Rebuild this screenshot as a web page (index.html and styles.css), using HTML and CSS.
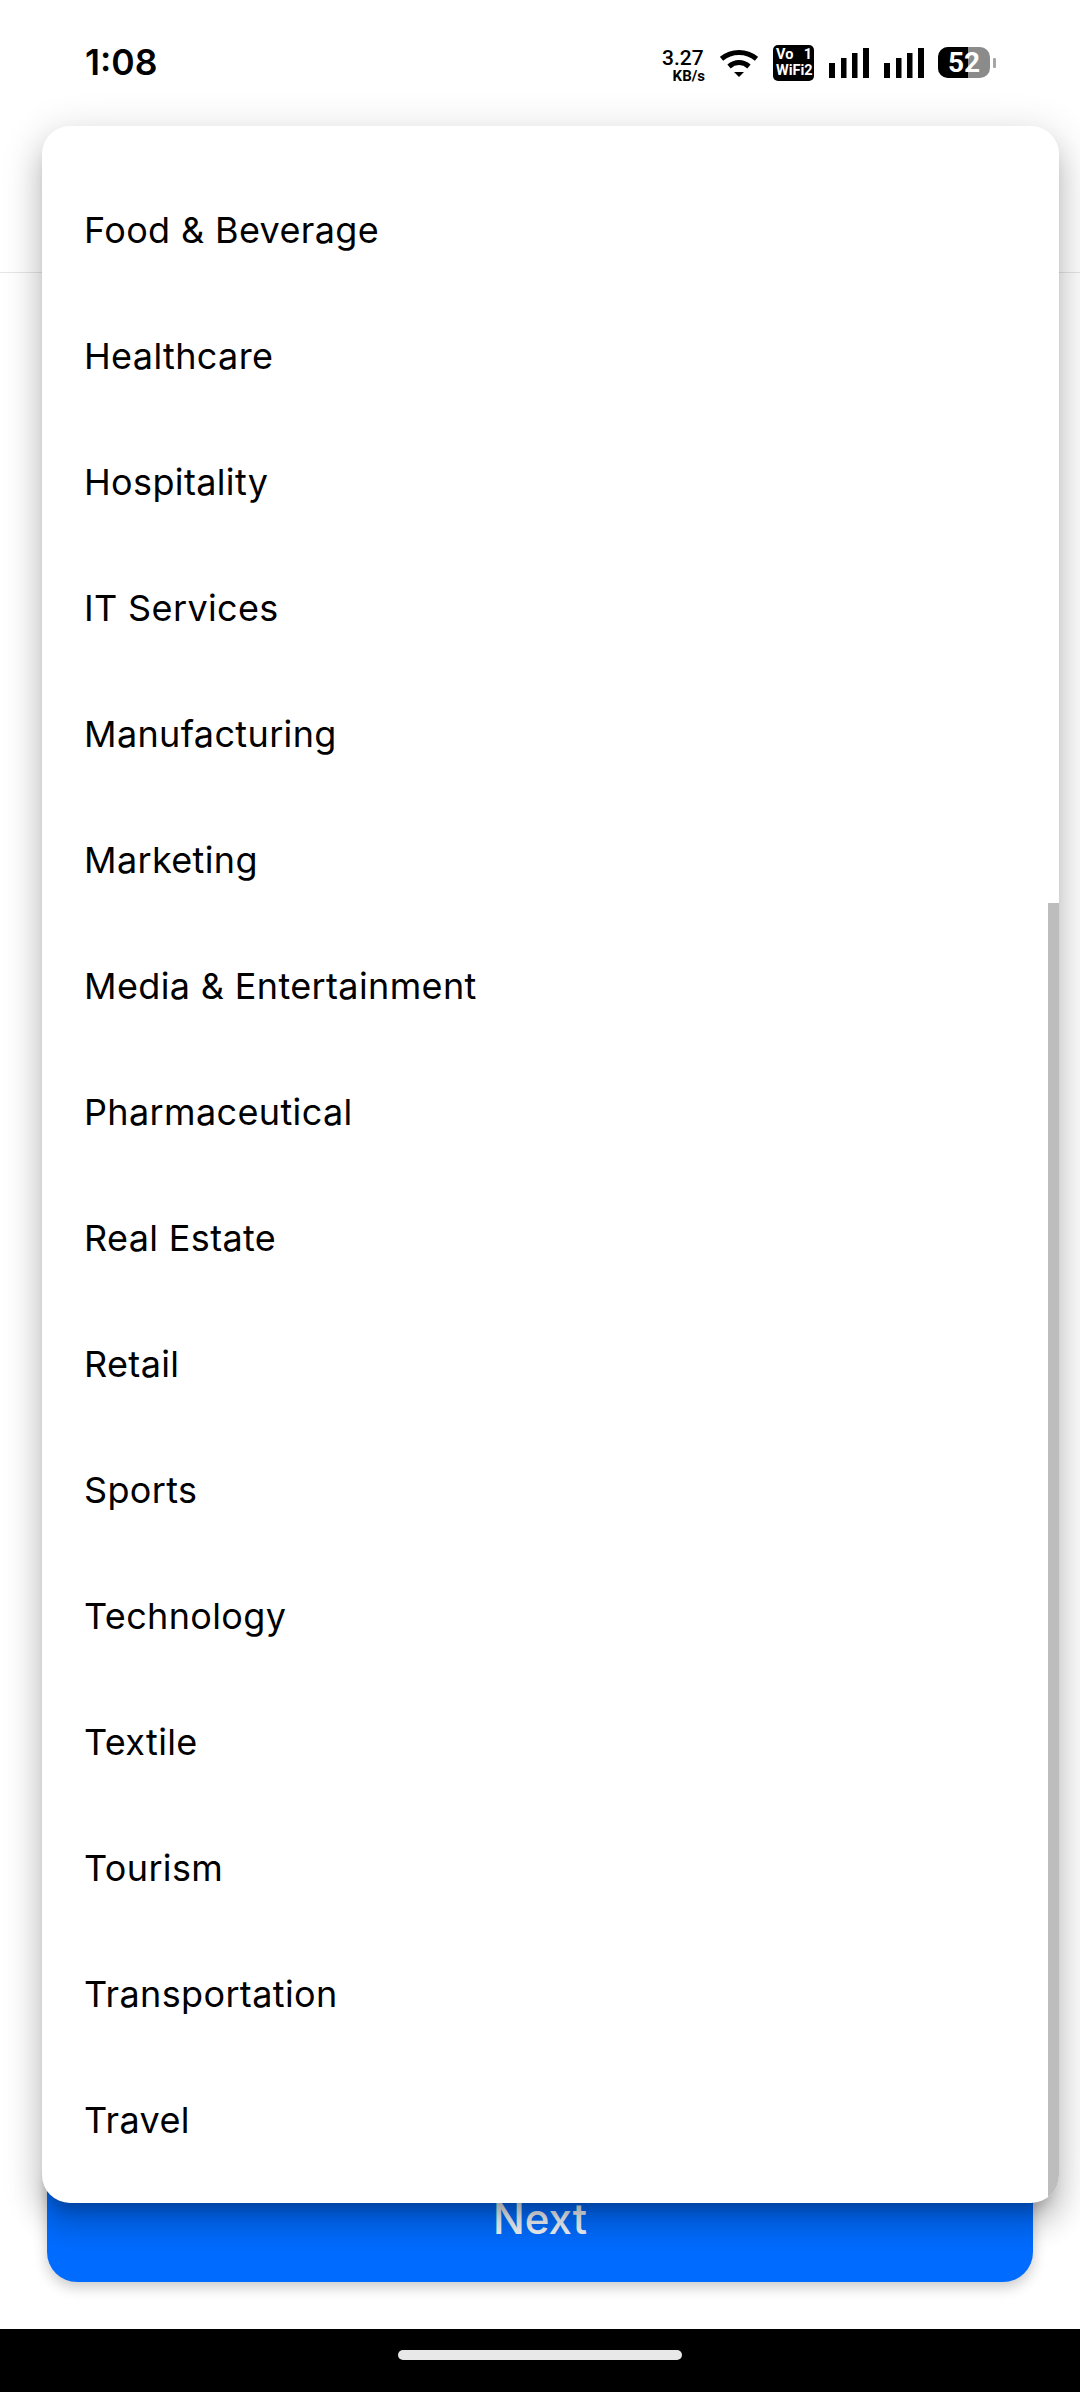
FILE: index.html
```html
<!DOCTYPE html>
<html lang="en">
<head>
<meta charset="utf-8">
<title>Industry picker</title>
<link rel="stylesheet" href="styles.css">
</head>
<body>
<div class="screen">
  <header class="status">
    <span class="time">1:08</span>
    <div class="status-icons">
      <div class="net"><span class="net-val">3.27</span><span class="net-unit">KB/s</span></div>
      <svg class="wifi" width="38" height="28" viewBox="0 0 38 28"><path d="M1.500 9.800C11.500 1.300 26.500 1.300 36.500 9.800" fill="none" stroke="#000" stroke-width="5"/><path d="M9 17.500C15 12.300 23 12.300 29 17.500" fill="none" stroke="#000" stroke-width="5"/><path d="M14 23h10l-5 5z" fill="#000"/></svg>
      <div class="volte"><span class="volte-row"><span>Vo</span><span>1</span></span><span class="volte-row"><span>WiFi</span><span>2</span></span></div>
      <svg class="signal" width="40" height="30" viewBox="0 0 40 30"><rect x="0" y="15" width="6" height="15"/><rect x="12" y="10" width="5.500" height="20"/><rect x="23" y="5" width="5.500" height="25"/><rect x="34" y="0" width="6" height="30"/></svg>
      <svg class="signal" width="40" height="30" viewBox="0 0 40 30"><rect x="0" y="15" width="6" height="15"/><rect x="12" y="10" width="5.500" height="20"/><rect x="23" y="5" width="5.500" height="25"/><rect x="34" y="0" width="6" height="30"/></svg>
      <div class="battery"><div class="battery-body"><span class="battery-fill"></span><span class="battery-val">52</span></div><span class="battery-nub"></span></div>
    </div>
  </header>
  <div class="appbar"></div>
  <main class="content">
    <button class="next">Next</button>
  </main>
  <footer class="nav"><span class="home"></span></footer>

  <div class="menu">
    <ul class="menu-list">
      <li>Food &amp; Beverage</li>
      <li>Healthcare</li>
      <li>Hospitality</li>
      <li>IT Services</li>
      <li>Manufacturing</li>
      <li>Marketing</li>
      <li>Media &amp; Entertainment</li>
      <li>Pharmaceutical</li>
      <li>Real Estate</li>
      <li>Retail</li>
      <li>Sports</li>
      <li>Technology</li>
      <li>Textile</li>
      <li>Tourism</li>
      <li>Transportation</li>
      <li>Travel</li>
    </ul>
    <span class="scrollbar"></span>
  </div>
</div>
</body>
</html>
```

FILE: styles.css
```css
* { box-sizing: border-box; }
html, body { margin: 0; padding: 0; background: #fff; }
body { font-family: "Inter", "Liberation Sans", sans-serif; color: #000; }

.screen {
  position: relative;
  width: 1080px;
  height: 2392px;
  display: flex;
  flex-direction: column;
  overflow: hidden;
  background: #fff;
}

.status {
  height: 90px;
  flex: none;
  display: flex;
  justify-content: space-between;
  align-items: flex-start;
  padding: 0 84px 0 85px;
}
.time {
  margin-top: 42px;
  font-size: 35.500px;
  line-height: 42px;
  font-weight: 600;
}
.status-icons {
  display: flex;
  align-items: flex-start;
  margin-top: 45px;
}
.net {
  width: 43px;
  margin: 3px 15px 0 0;
  display: flex;
  flex-direction: column;
  align-items: flex-end;
  font-family: "Roboto", sans-serif;
  font-weight: 500;
}
.net-val { font-size: 21px; line-height: 20px; align-self: flex-start; white-space: nowrap; }
.net-unit { font-size: 15px; line-height: 14px; font-weight: 700; margin-top: 1px; white-space: nowrap; }
.wifi { margin: 4px 15px 0 0; }
.volte {
  width: 41px;
  height: 36px;
  margin-right: 15px;
  padding: 2px 2px 0 3px;
  background: #000;
  border-radius: 5px;
  color: #fff;
  font-family: "Roboto", sans-serif;
  font-size: 14.500px;
  line-height: 16px;
  font-weight: 700;
  display: flex;
  flex-direction: column;
}
.volte-row { display: flex; justify-content: space-between; }
.signal { margin: 3px 15px 0 0; fill: #000; }
.signal + .battery { margin-left: -1px; }
.battery { display: flex; align-items: center; margin-top: 2px; }
.battery-body {
  position: relative;
  width: 52px;
  height: 31px;
  border-radius: 10px;
  background: #8b8b8b;
  display: flex;
  align-items: center;
  justify-content: center;
}
.battery-fill { position: absolute; left: 0; top: 0; bottom: 0; width: 30px; background: #000; border-radius: 10px 0 0 10px; }
.battery-val {
  position: relative;
  color: #fff;
  font-family: "Roboto", sans-serif;
  font-size: 28px;
  line-height: 31px;
  font-weight: 700;
}
.battery-nub { width: 3px; height: 10px; margin-left: 3px; background: #a6a6a6; border-radius: 1px; }

.appbar {
  height: 183px;
  flex: none;
  border-bottom: 1px solid #e6e6e6;
}

.content {
  flex: 1;
  display: flex;
  flex-direction: column;
  justify-content: flex-end;
  padding: 0 47px 47px;
}
.next {
  height: 128px;
  border: 0;
  border-radius: 30px;
  background: #006cff;
  color: #f0f3f8;
  font-family: "Inter", sans-serif;
  font-size: 42px;
  font-weight: 500;
  box-shadow: 0 5px 14px rgba(0, 0, 0, .22);
}

.nav {
  height: 63px;
  flex: none;
  background: #000;
  display: flex;
  justify-content: center;
  padding-top: 21px;
}
.home { width: 284px; height: 10px; border-radius: 5px; background: #e8e8e8; }

.menu {
  position: absolute;
  left: 42px;
  top: 126px;
  width: 1017px;
  height: 2077px;
  border-radius: 28px;
  background: #fff;
  overflow: hidden;
  box-shadow: 0 14px 14px -8px rgba(0, 0, 0, .2), 0 22px 28px 3px rgba(0, 0, 0, .14), 0 8px 38px 6px rgba(0, 0, 0, .12);
}
.menu-list {
  list-style: none;
  margin: 0;
  padding: 41px 0 20px;
}
.menu-list li {
  height: 126px;
  display: flex;
  align-items: center;
  padding-left: 42px;
  font-size: 36px;
  letter-spacing: .36px;
  font-weight: 400;
  color: #000;
}
.scrollbar {
  position: absolute;
  right: 0;
  top: 777px;
  bottom: 0;
  width: 11px;
  background: #bdbdbd;
}
```
